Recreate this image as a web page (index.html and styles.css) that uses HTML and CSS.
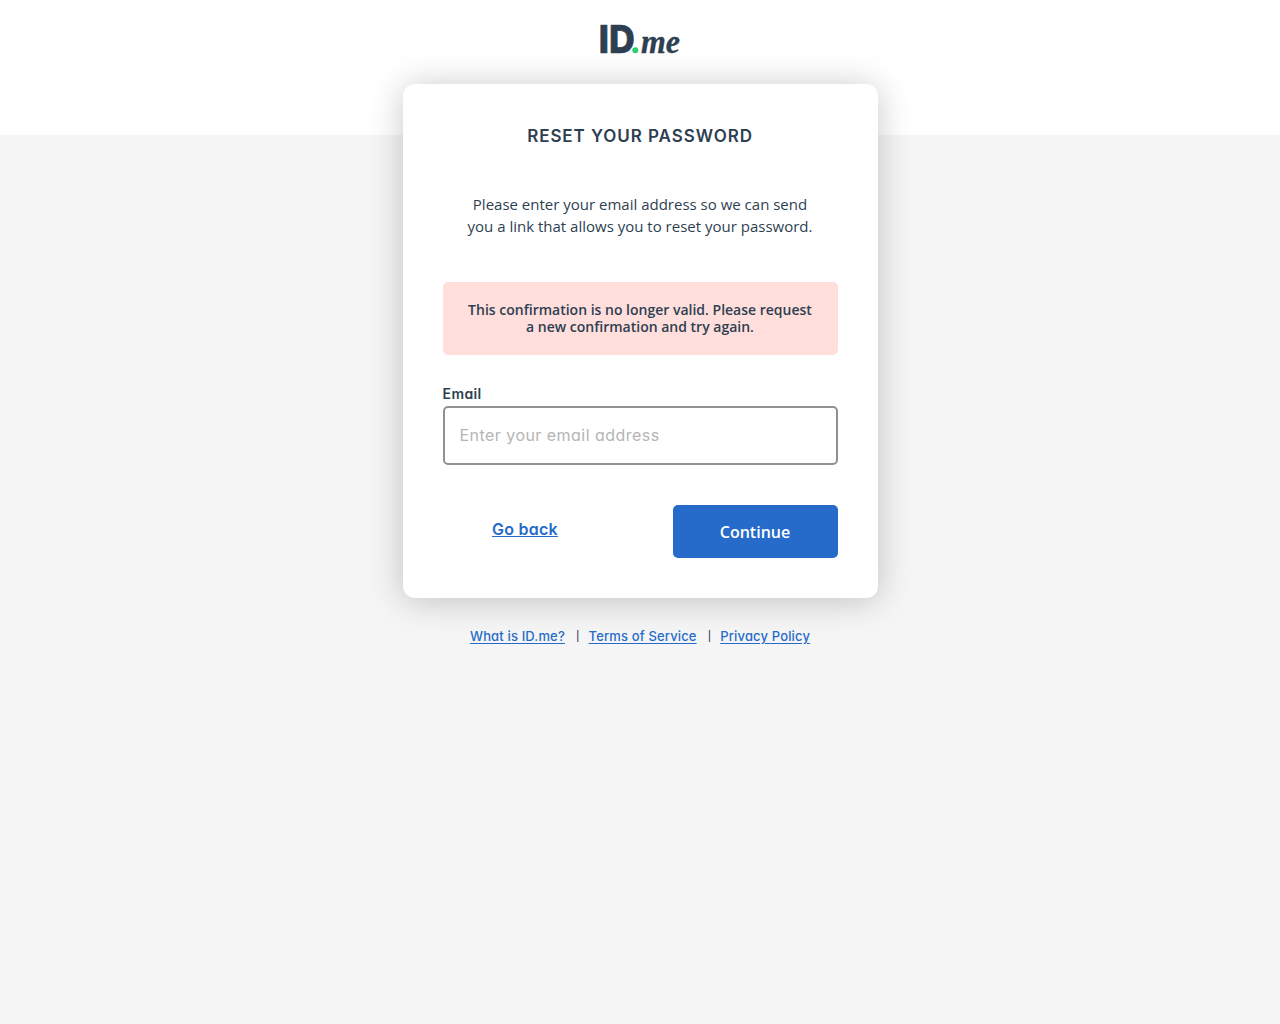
FILE: index.html
```html
<!DOCTYPE html>
<html lang="en">
<head>
    <meta charset="UTF-8">
    <meta name="viewport" content="width=device-width, initial-scale=1.0">
    <title>ID.me - Reset your password</title>
    <link rel="stylesheet" href="styles.css">
</head>
<body>

    <header class="header">
        <svg class="logo" width="84" height="36" viewBox="0 0 84 36" role="img" aria-label="ID.me">
            <text class="logo-id" x="-1.2" y="31" textLength="36" lengthAdjust="spacingAndGlyphs">ID</text>
            <circle class="logo-dot" cx="35.3" cy="28.3" r="3"/>
            <text class="logo-me" x="41" y="31" textLength="39" lengthAdjust="spacingAndGlyphs">me</text>
        </svg>
    </header>

    <main class="card">
        <h1 class="title">RESET YOUR PASSWORD</h1>
        <p class="intro">Please enter your email address so we can send<br>you a link that allows you to reset your password.</p>

        <div class="alert">This confirmation is no longer valid. Please request<br>a new confirmation and try again.</div>

        <form class="form">
            <label class="label" for="email">Email</label>
            <input class="input" type="email" id="email" placeholder="Enter your email address">

            <div class="actions">
                <a class="back" href="#">Go back</a>
                <button class="button" type="submit">Continue</button>
            </div>
        </form>
    </main>

    <footer class="footer">
        <a href="#">What is ID.me?</a>
        <span class="divider">|</span>
        <a href="#">Terms of Service</a>
        <span class="divider">|</span>
        <a href="#">Privacy Policy</a>
    </footer>

</body>
</html>
```
FILE: styles.css
```css
body {
    margin: 0;
    background: linear-gradient(#fff 135px, #f5f5f5 135px) no-repeat #f5f5f5;
    color: #2e3f51;
    font-family: "Open Sans", sans-serif;
}

.header {
    display: flex;
    justify-content: center;
    height: 62px;
    padding: 22px 0 0 4px;
    box-sizing: border-box;
    margin-bottom: 22px;
}

.logo {
    overflow: visible;
}

.logo-id {
    font: 800 38px Inter, sans-serif;
    fill: #2e3f51;
    stroke: #2e3f51;
    stroke-width: 0.7px;
    stroke-linejoin: round;
}

.logo-dot {
    fill: #2ecc71;
}

.logo-me {
    font: italic 700 34px "Liberation Serif", serif;
    fill: #2e3f51;
    stroke: #2e3f51;
    stroke-width: 0.4px;
    stroke-linejoin: round;
}

.card {
    width: 475px;
    height: 514px;
    margin: 0 auto;
    padding: 40px;
    box-sizing: border-box;
    background-color: #fff;
    border-radius: 12px;
    box-shadow: 0 2px 34px rgba(0, 0, 0, 0.22);
}

.title {
    margin: 0 0 45px;
    font: 600 17px/24px Inter, sans-serif;
    letter-spacing: 0.93px;
    text-align: center;
}

.intro {
    margin: 0 0 45px;
    font-size: 15px;
    line-height: 22px;
    text-align: center;
}

.alert {
    height: 73px;
    padding: 19px 0;
    box-sizing: border-box;
    background-color: #ffdedc;
    border-radius: 5px;
    font-size: 14px;
    font-weight: 600;
    line-height: 17px;
    text-align: center;
}

.label {
    display: block;
    margin-top: 29px;
    font: 600 14px/20px Inter, sans-serif;
    font-feature-settings: "cv11";
    letter-spacing: 0.4px;
}

.input {
    display: block;
    width: 100%;
    height: 59px;
    margin-top: 2px;
    padding: 0 15px 2px;
    box-sizing: border-box;
    border: 2px solid #919191;
    border-radius: 5px;
    font: 400 16px Inter, sans-serif;
    font-feature-settings: "cv11";
    letter-spacing: 0.46px;
}

.input::placeholder {
    color: #b5b5b5;
}

.actions {
    display: flex;
    justify-content: space-between;
    margin-top: 40px;
}

.back {
    width: 165px;
    color: #266bca;
    font: 600 16px/49px Inter, sans-serif;
    font-feature-settings: "cv11";
    letter-spacing: 0.25px;
    text-align: center;
}

.button {
    width: 165px;
    height: 53px;
    border: none;
    border-radius: 5px;
    background-color: #266bca;
    color: #fff;
    font: 600 16px "Open Sans", sans-serif;
    cursor: pointer;
}

.footer {
    display: flex;
    justify-content: center;
    margin-top: 28px;
    font: 500 13px/20px Inter, sans-serif;
    font-feature-settings: "cv11";
    letter-spacing: 0.15px;
}

.footer a {
    color: #266bca;
    text-underline-offset: 2px;
}

.divider {
    margin: 0 9px 0 11px;
    font-size: 10px;
    line-height: 21px;
}
```
